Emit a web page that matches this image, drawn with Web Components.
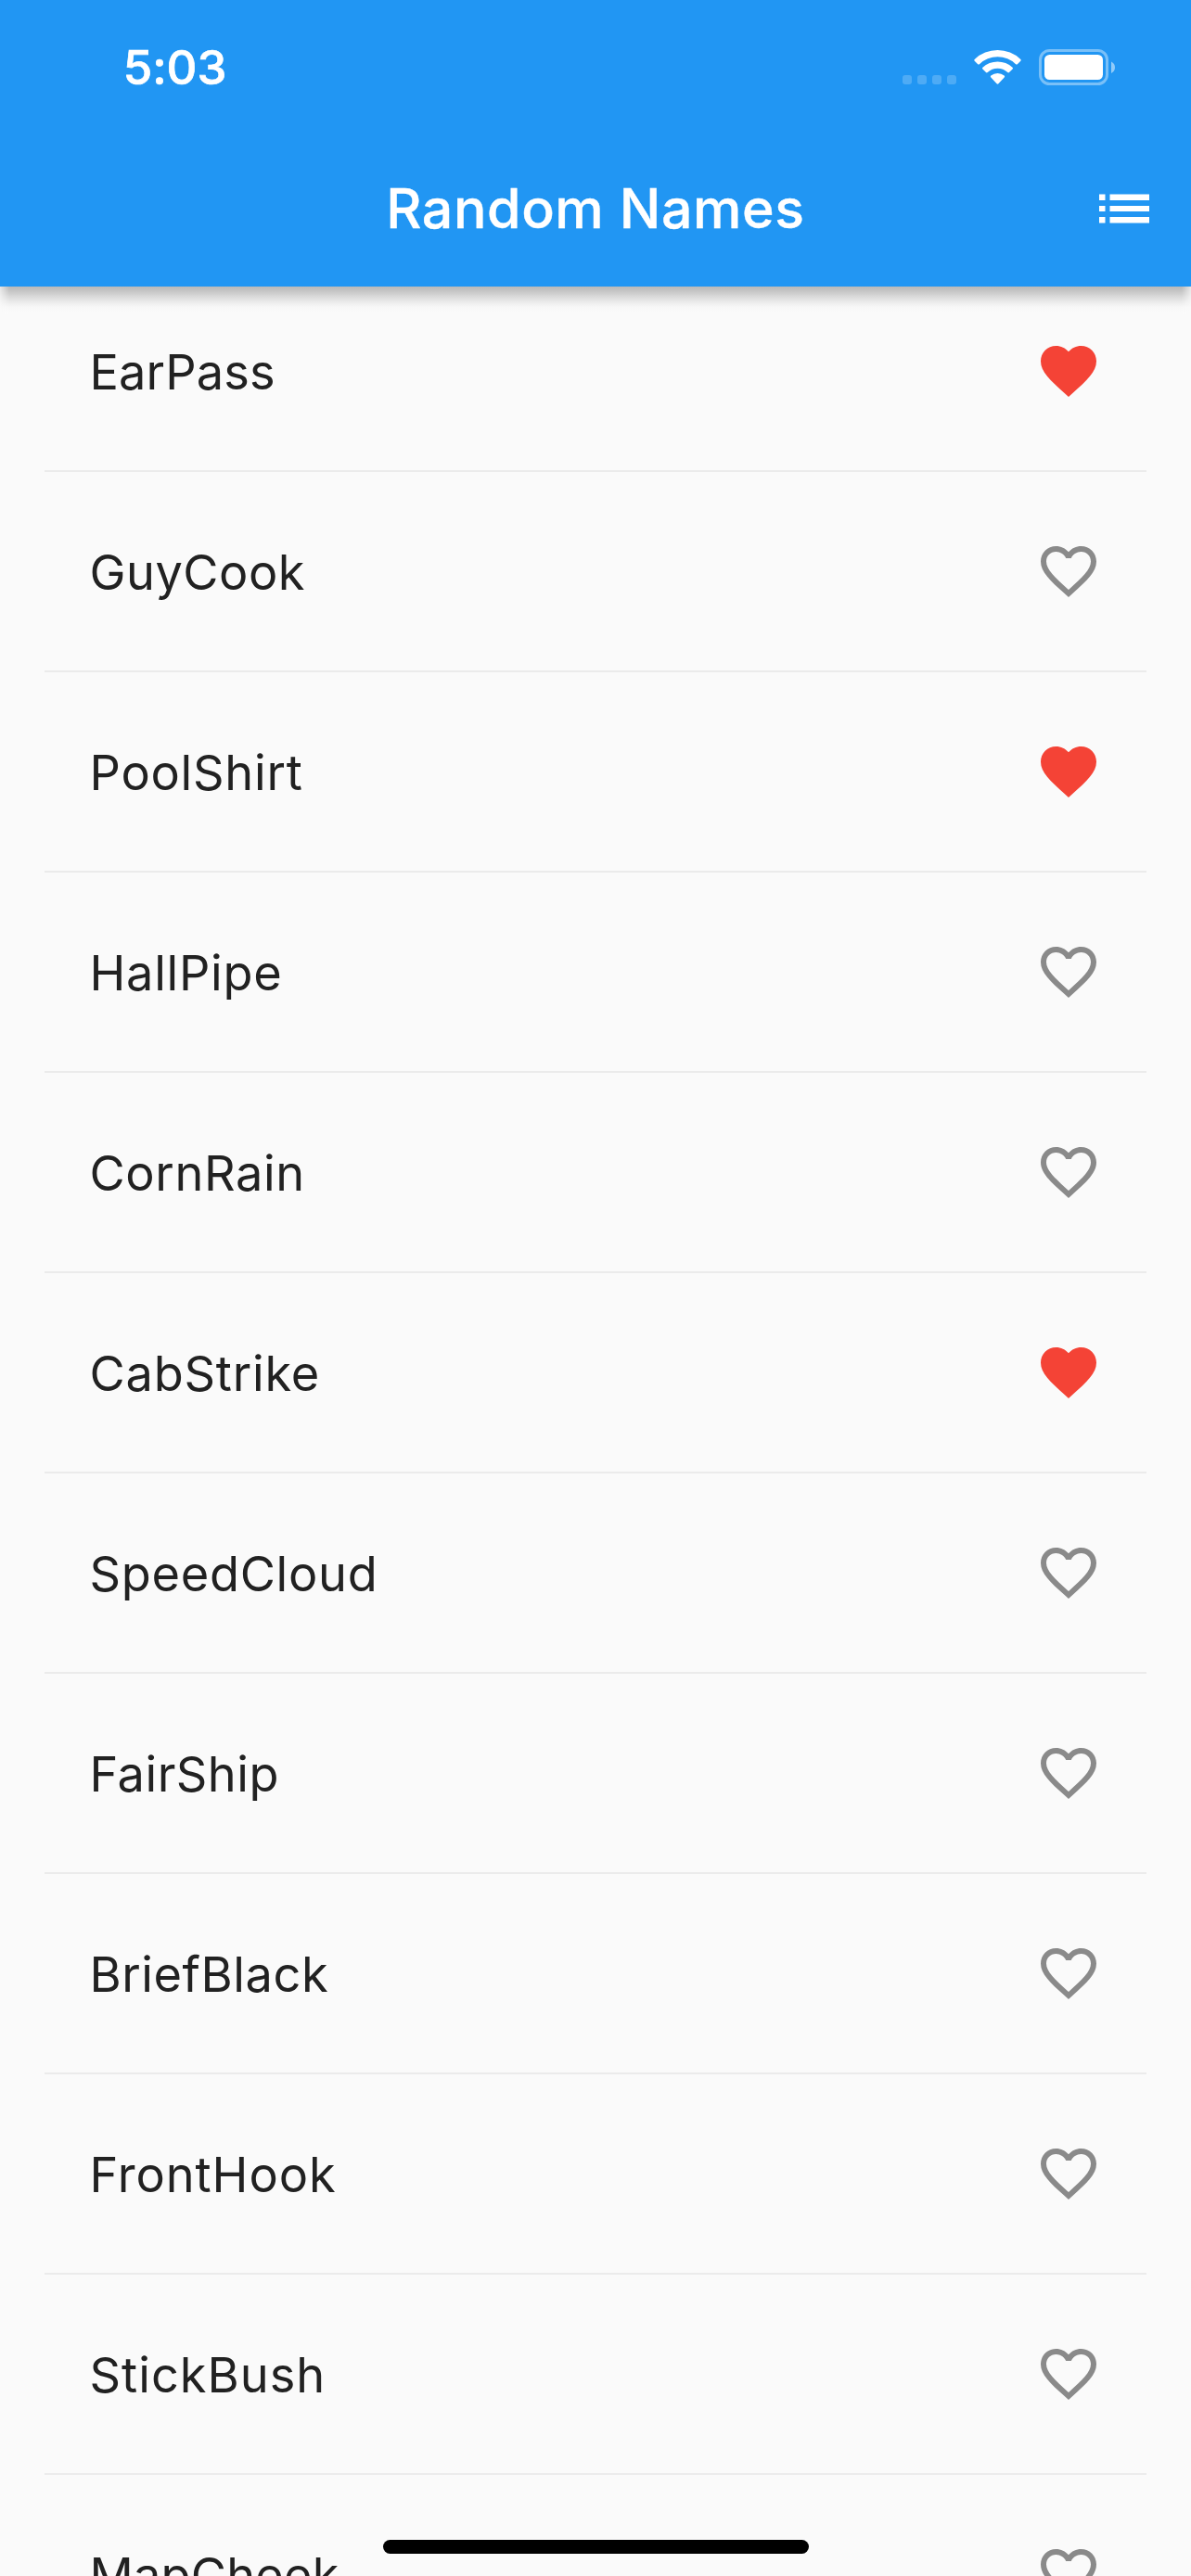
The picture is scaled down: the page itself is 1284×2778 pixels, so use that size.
<!DOCTYPE html>
<html lang="en">
<head>
<meta charset="utf-8">
<title>Random Names</title>
<style>
  html, body { margin: 0; height: 2778px; overflow: hidden; background: #fafafa; font-family: Inter, "Liberation Sans", sans-serif; }
</style>
</head>
<body>
<names-app>
  <app-header slot="header">
    <status-bar slot="status">5:03</status-bar>
    Random Names
  </app-header>
  <name-row liked style="--track:.12px">EarPass</name-row>
  <name-row style="--track:.5px">GuyCook</name-row>
  <name-row liked style="--track:.76px">PoolShirt</name-row>
  <name-row style="--track:.72px">HallPipe</name-row>
  <name-row style="--track:.62px">CornRain</name-row>
  <name-row liked style="--track:.78px">CabStrike</name-row>
  <name-row style="--track:.72px">SpeedCloud</name-row>
  <name-row style="--track:.5px">FairShip</name-row>
  <name-row style="--track:.56px">BriefBlack</name-row>
  <name-row style="--track:.92px">FrontHook</name-row>
  <name-row style="--track:1.02px">StickBush</name-row>
  <name-row style="--track:.2px">MapCheek</name-row>
</names-app>

<script>
const define = (tag, html) => {
  const template = document.createElement('template');
  template.innerHTML = html;
  customElements.define(tag, class extends HTMLElement {
    constructor() {
      super();
      this.attachShadow({ mode: 'open' }).append(template.content.cloneNode(true));
    }
  });
};

define('status-bar', `
  <style>
    :host { display: flex; justify-content: space-between; align-items: center; box-sizing: border-box;
      height: 141px; padding: 5px 81px 0 132.800px; color: #fff; font-size: 51px; font-weight: 500; letter-spacing: -.1px; line-height: 60px;
      -webkit-text-stroke: .7px #fff; }
    svg { display: block; width: 232px; height: 42px; }
  </style>
  <span><slot></slot></span>
  <svg viewBox="971 52 232 42" fill="#fff">
    <g opacity=".2">
      <rect x="973" y="81" width="10" height="10" rx="3"/>
      <rect x="989" y="81" width="10" height="10" rx="3"/>
      <rect x="1005" y="81" width="10" height="10" rx="3"/>
      <rect x="1021" y="81" width="10" height="10" rx="3"/>
    </g>
    <path d="M1050.7 63.9a36.1 36.1 0 0 1 49.6 0q.9.9 0 1.8l-3.5 3.5q-.8.8-1.7 0a28.2 28.2 0 0 0-39.2 0q-.9.8-1.7 0l-3.5-3.5q-.9-.9 0-1.8z"/>
    <path d="M1059.4 72.8a23.6 23.6 0 0 1 32.2 0q.9.9 0 1.8l-3.6 3.5q-.8.8-1.7 0a15.9 15.9 0 0 0-21.6 0q-.9.8-1.7 0l-3.6-3.5q-.9-.9 0-1.8z"/>
    <path d="M1068.3 81.6a11.2 11.2 0 0 1 14.4 0q1 .9 0 1.8l-6.3 6.9q-.9.9-1.8 0l-6.3-6.9q-1-.9 0-1.8z"/>
    <rect x="1121.5" y="54.5" width="72" height="36" rx="10" fill="none" stroke="#fff" stroke-width="3" opacity=".4"/>
    <rect x="1126" y="59" width="63" height="27" rx="5.5"/>
    <path d="M1198 66.5q4 2 4 6.200t-4 6.200z" opacity=".5"/>
  </svg>`);

define('app-header', `
  <style>
    :host { display: flex; flex-direction: column; height: 309px; background: #2196f3; color: #fff; position: relative; }
    :host::after { content: ""; height: 30px; margin-bottom: -30px; flex: none;
      background: linear-gradient(#b9b9b9, #c6c6c6 5px, #dadada 11px, #ececec 17px, #f7f7f7 22px, #fafafa 27px);
      -webkit-mask: linear-gradient(90deg, rgba(0,0,0,.3), #000 10px, #000 1274px, rgba(0,0,0,.3));
      mask: linear-gradient(90deg, rgba(0,0,0,.3), #000 10px, #000 1274px, rgba(0,0,0,.3)); }
    .bar { height: 168px; flex: none; display: grid; grid-template-columns: 108px 1fr 108px; align-items: center; }
    h1 { grid-column: 2; margin: 0; text-align: center; font-size: 59px; font-weight: 500; letter-spacing: .6px; line-height: 72px; -webkit-text-stroke: .4px #fff; }
    svg { width: 72px; height: 72px; }
  </style>
  <slot name="status"></slot>
  <div class="bar">
    <h1><slot></slot></h1>
    <svg viewBox="0 0 72 72" fill="#fff">
      <path d="M9 20.500h6.500V27H9zM20.500 20.500H63V27H20.500zM9 33h6.500v6H9zM20.500 33H63v6H20.500zM9 45h6.500v6.500H9zM20.500 45H63v6.500H20.500z"/>
    </svg>
  </div>`);

define('name-row', `
  <style>
    :host { display: flex; flex-direction: column; flex: none; height: 216px; }
    .tile { height: 168px; display: flex; align-items: center; justify-content: space-between; padding: 0 96px 0 96.500px; }
    .name { padding-top: 2px; color: #212121; font-size: 52.300px; letter-spacing: var(--track, 0); line-height: 64px; }
    svg { width: 72px; height: 72px; fill: #8a8a8a; }
    .full { display: none; }
    :host([liked]) svg { fill: #f44336; }
    :host([liked]) .full { display: block; }
    :host([liked]) .outline { display: none; }
    hr { width: 1188px; height: 2px; margin: 23px auto; border: 0; background: #ebebeb; }
  </style>
  <div class="tile">
    <span class="name"><slot></slot></span>
    <svg viewBox="0 0 24 24">
      <path class="full" d="M12 21.350l-1.450-1.320C5.400 15.360 2 12.280 2 8.500 2 5.420 4.420 3 7.500 3c1.740 0 3.410.810 4.500 2.090C13.090 3.810 14.760 3 16.500 3 19.580 3 22 5.420 22 8.500c0 3.780-3.400 6.860-8.550 11.540L12 21.350z"/>
      <path class="outline" d="M16.500 3c-1.740 0-3.410.810-4.500 2.090C10.910 3.810 9.240 3 7.500 3 4.420 3 2 5.420 2 8.500c0 3.780 3.400 6.860 8.550 11.540L12 21.350l1.450-1.320C18.600 15.360 22 12.280 22 8.500 22 5.420 19.580 3 16.500 3zm-4.400 15.550l-.1.1-.1-.1C7.140 14.240 4 11.390 4 8.500 4 6.500 5.500 5 7.500 5c1.540 0 3.040.990 3.570 2.360h1.870C13.460 5.990 14.960 5 16.500 5c2 0 3.500 1.500 3.500 3.500 0 2.890-3.140 5.740-7.900 10.050z"/>
    </svg>
  </div>
  <hr>`);

define('names-app', `
  <style>
    :host { display: flex; flex-direction: column; position: relative; width: 1284px; height: 2778px; overflow: hidden; background: #fafafa; }
    ::slotted(app-header) { flex: none; }
    main { flex: 1; min-height: 0; overflow: hidden; display: flex; flex-direction: column; padding-top: 7px; }
    .home { position: absolute; left: 413px; bottom: 24px; width: 459px; height: 15px; border-radius: 8px; background: #000; }
  </style>
  <slot name="header"></slot>
  <main><slot></slot></main>
  <div class="home"></div>`);
</script>
</body>
</html>
